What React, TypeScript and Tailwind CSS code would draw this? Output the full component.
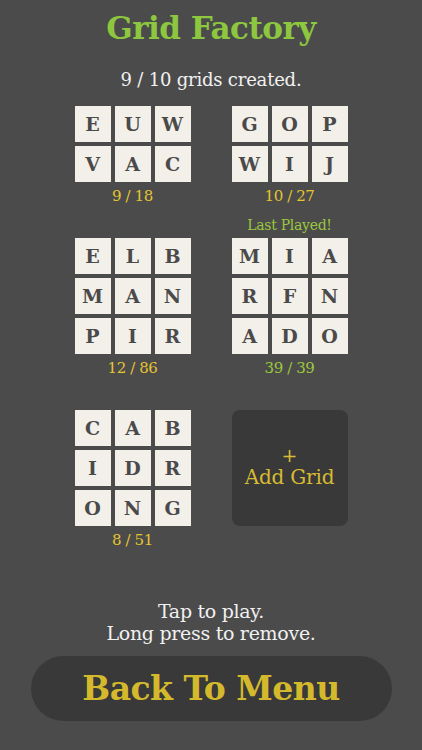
const slab = { fontFamily: '"DejaVu Serif", "Liberation Serif", serif' };

type Grid = { rows: string[]; count: string; done?: boolean; last?: boolean };

const grids: Grid[] = [
  { rows: ["EUW", "VAC"], count: "9 / 18" },
  { rows: ["GOP", "WIJ"], count: "10 / 27" },
  { rows: ["ELB", "MAN", "PIR"], count: "12 / 86" },
  { rows: ["MIA", "RFN", "ADO"], count: "39 / 39", done: true, last: true },
  { rows: ["CAB", "IDR", "ONG"], count: "8 / 51" },
];

function GridCard({ grid }: { grid: Grid }) {
  return (
    <div className="relative flex flex-col items-center">
      {grid.last && (
        <div className="absolute -top-[22px] text-[14px] leading-[18px] text-[#9cc63e] tracking-[-0.3px]">
          Last Played!
        </div>
      )}
      <div className="flex flex-col gap-[4px]">
        {grid.rows.map((row, r) => (
          <div key={r} className="flex gap-[4px]">
            {row.split("").map((ch, c) => (
              <div
                key={c}
                className="w-[36px] h-[36px] bg-[#f3efe9] flex items-center justify-center text-[19px] font-bold text-[#4a4a4a]"
              >
                {ch}
              </div>
            ))}
          </div>
        ))}
      </div>
      <div
        className={`h-[28px] flex items-center text-[15px] tracking-[-0.4px] ${
          grid.done ? "text-[#9cc63e]" : "text-[#e6c530]"
        }`}
      >
        {grid.count}
      </div>
    </div>
  );
}

export default function App() {
  return (
    <div className="w-full min-h-[750px] bg-[#4b4b4b] flex flex-col items-center" style={slab}>
      <h1 className="mt-[8px] text-[31px] leading-[40px] font-bold text-[#8dc63f] tracking-[-0.5px]">
        Grid Factory
      </h1>
      <p className="mt-[20px] text-[18px] leading-[24px] text-[#f1f1f1] tracking-[-0.2px]">
        9 / 10 grids created.
      </p>
      <div className="mt-[14px] grid grid-cols-[116px_116px] gap-x-[41px] gap-y-[28px]">
        {grids.map((g, i) => (
          <GridCard key={i} grid={g} />
        ))}
        <button className="h-[116px] rounded-[8px] bg-[#393939] flex flex-col items-center justify-center text-[#d8bb33]">
          <span className="text-[19px] leading-[18px]">+</span>
          <span className="text-[20px] leading-[26px] tracking-[-0.2px]">Add Grid</span>
        </button>
      </div>
      <div className="mt-[46px] flex flex-col items-center text-[19px] leading-[22px] text-[#f1f1f1] tracking-[-0.3px]">
        <span>Tap to play.</span>
        <span>Long press to remove.</span>
      </div>
      <button className="mt-[12px] w-[361px] h-[65px] rounded-full bg-[#393939] flex items-center justify-center text-[33px] font-bold text-[#d4b92c] tracking-[-0.5px]">
        Back To Menu
      </button>
    </div>
  );
}
